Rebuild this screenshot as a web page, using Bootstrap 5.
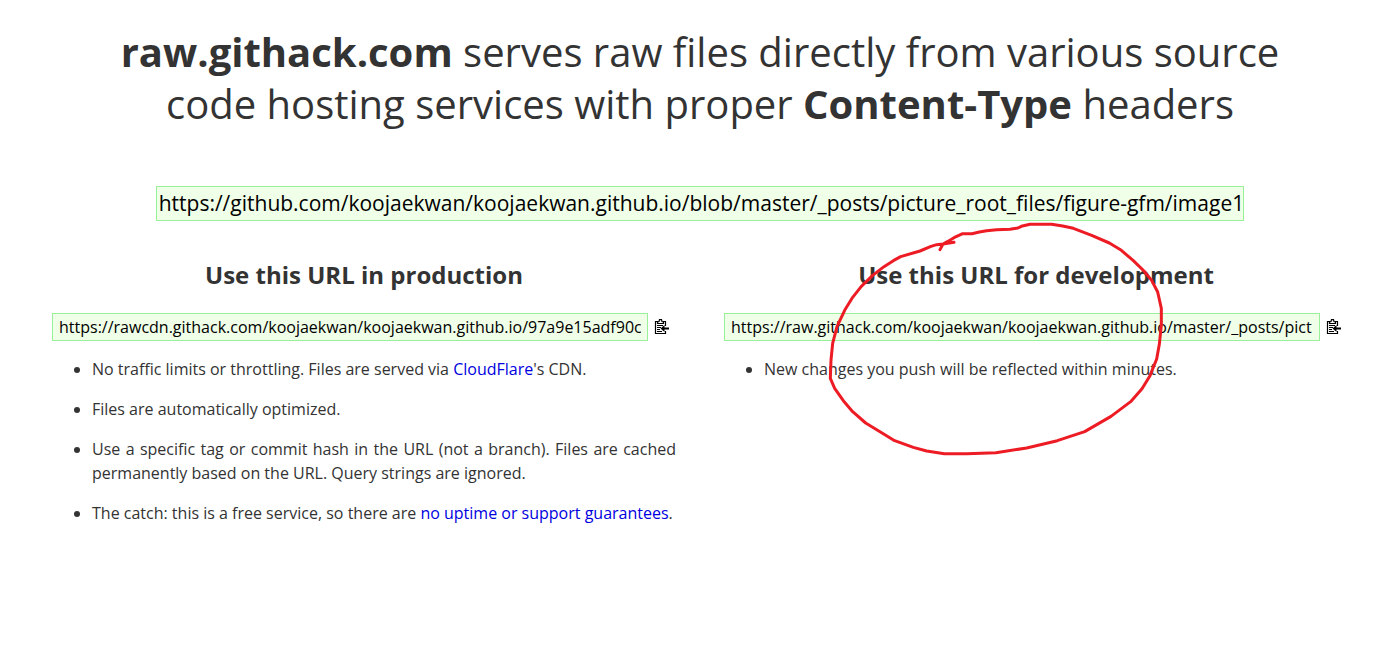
<!DOCTYPE html>
<html lang="en">
<head>
<meta charset="utf-8">
<meta name="viewport" content="width=device-width, initial-scale=1">
<title>raw.githack.com</title>
<link href="https://cdn.jsdelivr.net/npm/bootstrap@5.3.0/dist/css/bootstrap.min.css" rel="stylesheet">
<style>
  body { font-family: "Open Sans", sans-serif; font-weight: 400; color: #333; background: #fff; }
  .page-wrap { padding: 26px 13px 0 28px; }
  .headline { font-size: 40px; line-height: 52px; font-weight: 400; padding: 0 72px; margin-bottom: 56px; }
  .headline strong { font-weight: 700; }
  .url-box { min-width: 0; border: 1px solid #98f098; background: #f0ffe8; color: #000; font-weight: 400; border-radius: 0; outline: 0; }
  .url-source { width: 81%; height: 35px; padding: 0 2px 2px; font-size: 21px; }
  .url-result { height: 28px; padding: 0 6px; font-size: 16px; }
  .section-title { font-size: 24px; line-height: 32px; font-weight: 700; margin-bottom: 22px; }
  .columns { margin-top: 38px; }
  .col-pad { padding: 0 24px; }
  .copy-btn { width: 28px; height: 28px; padding: 0 6px; border: 0; background: none; color: #000; line-height: 0; }
  .notes { margin: 16px 0 0; padding-left: 40px; line-height: 24px; text-align: justify; }
  .notes li { margin-bottom: 16px; }
  .notes a { color: #0000e0; text-decoration: none; }
  .pen-mark { left: 120px; top: -44px; pointer-events: none; }
</style>
</head>
<body>
<svg class="d-none" aria-hidden="true">
  <symbol id="paste" viewBox="0 0 16 16">
    <path d="M4 2.500H1.500V14.500H11.500V12M9 2.500H11.500V7" fill="none" stroke="currentColor" stroke-width="1.200"/>
    <path d="M3.500 4.500V3L5 2.500L5.500 .7H7.500L8 2.500L9.500 3V4.500Z" fill="#fff" stroke="currentColor" stroke-width="1.200"/>
    <path d="M3 6.500H9M3 8.500H7M3 10.500H6M3 12.500H8" stroke="currentColor"/>
    <path d="M6.500 9.500L10.500 6V8.500H15V10.500H10.500V13Z" fill="currentColor"/>
  </symbol>
</svg>
<main class="page-wrap">
  <h1 class="headline text-center"><strong>raw.githack.com</strong> serves raw files directly from various source code hosting services with proper <strong>Content-Type</strong> headers</h1>
  <div class="d-flex justify-content-center">
    <input class="url-box url-source" type="text" aria-label="Source URL" value="https://github.com/koojaekwan/koojaekwan.github.io/blob/master/_posts/picture_root_files/figure-gfm/image1">
  </div>
  <div class="row g-0 columns">
    <section class="col-6 col-pad">
      <h2 class="section-title text-center">Use this URL in production</h2>
      <div class="d-flex">
        <input class="url-box url-result flex-grow-1" type="text" readonly aria-label="Production URL" value="https://rawcdn.githack.com/koojaekwan/koojaekwan.github.io/97a9e15adf90c">
        <button class="copy-btn" type="button" aria-label="Copy production URL"><svg width="16" height="16"><use href="#paste"/></svg></button>
      </div>
      <ul class="notes">
        <li>No traffic limits or throttling. Files are served via <a href="#">CloudFlare</a>'s CDN.</li>
        <li>Files are automatically optimized.</li>
        <li>Use a specific tag or commit hash in the URL (not a branch). Files are cached permanently based on the URL. Query strings are ignored.</li>
        <li>The catch: this is a free service, so there are <a href="#">no uptime or support guarantees</a>.</li>
      </ul>
    </section>
    <section class="col-6 col-pad position-relative">
      <h2 class="section-title text-center">Use this URL for development</h2>
      <div class="d-flex">
        <input class="url-box url-result flex-grow-1" type="text" readonly aria-label="Development URL" value="https://raw.githack.com/koojaekwan/koojaekwan.github.io/master/_posts/pict">
        <button class="copy-btn" type="button" aria-label="Copy development URL"><svg width="16" height="16"><use href="#paste"/></svg></button>
      </div>
      <ul class="notes">
        <li>New changes you push will be reflected within minutes.</li>
      </ul>
      <svg class="pen-mark position-absolute" width="360" height="250" viewBox="0 0 1080 750" aria-hidden="true">
        <path d="M360 104L369 87L382 80L402 68L428 56H456L478 51L500 47L530 44L570 43L594 39L604 34L630 28H695L728 33L760 40L815 61L868 84L904 106L940 137L972 168L995 196L1013 231L1024 280V330L1018 388L1010 432L990 482L966 521L932 560L873 604L794 650L712 677L620 699L528 713L440 716H373L320 708L280 697L224 677L180 650L137 624L98 590L70 557L44 520L31 490L33 435L38 385L51 335L74 286L98 247L124 214L158 181L192 155L220 137L242 125L300 108L333 94L350 89L369 87L402 82" fill="none" stroke="#ed1c24" stroke-width="9" stroke-linecap="round" stroke-linejoin="round"/>
      </svg>
    </section>
  </div>
</main>
<script src="https://cdn.jsdelivr.net/npm/bootstrap@5.3.0/dist/js/bootstrap.bundle.min.js"></script>
</body>
</html>
